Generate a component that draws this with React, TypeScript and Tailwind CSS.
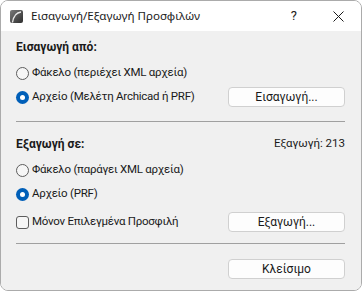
import React from "react";

const font = { fontFamily: 'Roboto, "Noto Sans", sans-serif' };

function Radio({ checked }: { checked?: boolean }) {
  return checked ? (
    <span className="w-[13px] h-[13px] rounded-full bg-[#005fb8] flex items-center justify-center shrink-0">
      <span className="w-[5px] h-[5px] rounded-full bg-white" />
    </span>
  ) : (
    <span className="w-[13px] h-[13px] rounded-full border border-[#5d5d5d] bg-[#f6f6f6] shrink-0" />
  );
}

function Btn({ children }: { children: React.ReactNode }) {
  return (
    <div className="w-[117px] h-[20px] bg-[#fdfdfd] border border-[#d0d0d0] rounded-[4px] flex items-center justify-center text-[12px] text-[#1a1a1a] leading-none">
      {children}
    </div>
  );
}

function Row({ children, right }: { children: React.ReactNode; right?: React.ReactNode }) {
  return (
    <div className="h-[24px] flex items-center justify-between">
      <div className="flex items-center gap-[3px] text-[11.5px] tracking-[-0.25px] text-[#1a1a1a]">{children}</div>
      {right}
    </div>
  );
}

export default function App() {
  return (
    <div className="w-[362px] h-[292px] bg-white" style={font}>
      <div className="w-[362px] h-[291px] border border-[#ababab] rounded-[8px] overflow-hidden flex flex-col">
        <div className="h-[30px] bg-white flex items-center shrink-0">
          <svg width="13" height="13" viewBox="0 0 13 13" className="ml-[9px] mt-[1px]">
            <defs>
              <linearGradient id="lg" x1="0" y1="0" x2="1" y2="1">
                <stop offset="0" stopColor="#7a7a7a" />
                <stop offset="1" stopColor="#2e2e2e" />
              </linearGradient>
            </defs>
            <rect x="0" y="0" width="13" height="13" rx="2" fill="url(#lg)" />
            <path d="M2.5 12.5 C3.5 6 6.5 2.5 11 2" stroke="#e8e8e8" strokeWidth="1.3" fill="none" />
          </svg>
          <span className="ml-[8px] text-[11.6px] text-[#1a1a1a]" style={{ fontFamily: '"Noto Sans", sans-serif' }}>
            Εισαγωγή/Εξαγωγή Προσφιλών
          </span>
          <span className="ml-auto text-[13px] text-[#1a1a1a] mr-[36px]">?</span>
          <svg width="11" height="11" viewBox="0 0 11 11" className="mr-[17px]">
            <path d="M0.5 0.5 L10.5 10.5 M10.5 0.5 L0.5 10.5" stroke="#1a1a1a" strokeWidth="1" />
          </svg>
        </div>
        <div className="flex-1 bg-[#f0f0f0] pl-[15px] pr-[16px] pt-[5px] flex flex-col">
          <div className="h-[22px] flex items-center text-[12px] font-bold text-[#1a1a1a]">Εισαγωγή από:</div>
          <div className="mt-[3px]">
            <Row>
              <Radio />
              <span>Φάκελο (περιέχει XML αρχεία)</span>
            </Row>
            <Row right={<Btn>Εισαγωγή...</Btn>}>
              <Radio checked />
              <span>Αρχείο (Μελέτη Archicad ή PRF)</span>
            </Row>
          </div>
          <div className="mt-[12px] h-px bg-[#a0a0a0]" />
          <div className="mt-[11px] h-[22px] flex items-center justify-between text-[12px] text-[#1a1a1a]">
            <span className="font-bold">Εξαγωγή σε:</span>
            <span className="text-[11.5px]">Εξαγωγή: 213</span>
          </div>
          <div className="mt-[3px]">
            <Row>
              <Radio />
              <span>Φάκελο (παράγει XML αρχεία)</span>
            </Row>
            <Row>
              <Radio checked />
              <span>Αρχείο (PRF)</span>
            </Row>
          </div>
          <div className="mt-[4px]">
            <Row right={<Btn>Εξαγωγή...</Btn>}>
              <span className="w-[13px] h-[13px] rounded-[3px] border border-[#5d5d5d] bg-[#f6f6f6] shrink-0" />
              <span>Μόνον Επιλεγμένα Προσφιλή</span>
            </Row>
          </div>
          <div className="mt-[9px] h-px bg-[#a0a0a0]" />
          <div className="mt-[15px] flex justify-end">
            <Btn>Κλείσιμο</Btn>
          </div>
        </div>
      </div>
    </div>
  );
}
